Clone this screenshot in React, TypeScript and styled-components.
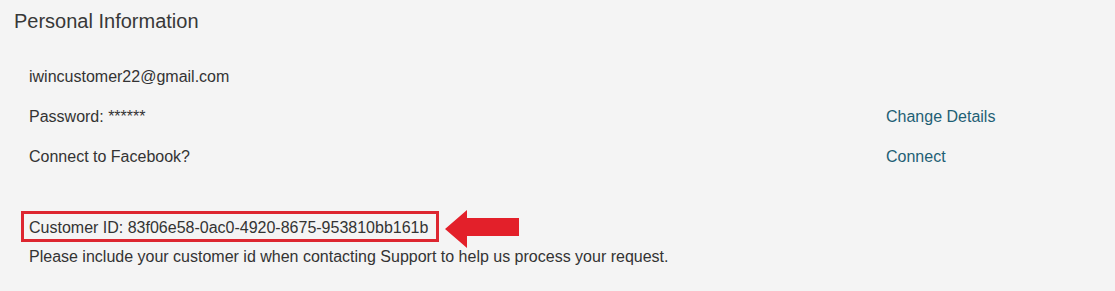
import React from 'react';
import styled, { createGlobalStyle } from 'styled-components';

const GlobalStyle = createGlobalStyle`
  body {
    margin: 0;
    background: #f4f4f4;
    font-family: "Liberation Sans", Arial, sans-serif;
    color: #333333;
  }
`;

const Page = styled.div`
  padding-top: 9px;
  min-height: 282px;
`;

const Heading = styled.h2`
  margin: 0 0 0 14px;
  font-size: 20px;
  font-weight: normal;
  line-height: 24px;
  color: #383838;
`;

const InfoList = styled.div`
  display: flex;
  flex-direction: column;
  gap: 18px;
  margin-top: 33px;
  padding-left: 29px;
`;

const Row = styled.div`
  display: grid;
  grid-template-columns: 1fr 229px;
  font-size: 16px;
  line-height: 22px;
`;

const Action = styled.a`
  color: #1f5f75;
  text-decoration: none;
  cursor: pointer;
`;

const IdBlock = styled.div`
  margin-top: 43px;
  padding-left: 21px;
  font-size: 16px;
`;

const IdRow = styled.div`
  display: flex;
  align-items: flex-start;
  gap: 6px;
`;

const IdBox = styled.div`
  border: 3px solid #dd2630;
  padding: 3px 8px 0 5px;
  line-height: 22px;
`;

const Arrow = styled.svg`
  margin-top: -1px;
  flex: none;
`;

const Note = styled.p`
  margin: 0;
  padding-left: 8px;
  line-height: 17px;
`;

const rows = [
  { label: 'iwincustomer22@gmail.com' },
  { label: 'Password: ******', action: 'Change Details' },
  { label: 'Connect to Facebook?', action: 'Connect' },
];

export default function App() {
  return (
    <Page>
      <GlobalStyle />
      <Heading>Personal Information</Heading>

      <InfoList>
        {rows.map((row) => (
          <Row key={row.label}>
            <span>{row.label}</span>
            {row.action && <Action>{row.action}</Action>}
          </Row>
        ))}
      </InfoList>

      <IdBlock>
        <IdRow>
          <IdBox>Customer ID: 83f06e58-0ac0-4920-8675-953810bb161b</IdBox>
          <Arrow width="75" height="38" viewBox="0 0 75 38">
            <polygon points="0,19 22,0 22,8 74,8 74,26 22,26 22,38" fill="#e3202a" />
          </Arrow>
        </IdRow>
        <Note>Please include your customer id when contacting Support to help us process your request.</Note>
      </IdBlock>
    </Page>
  );
}
